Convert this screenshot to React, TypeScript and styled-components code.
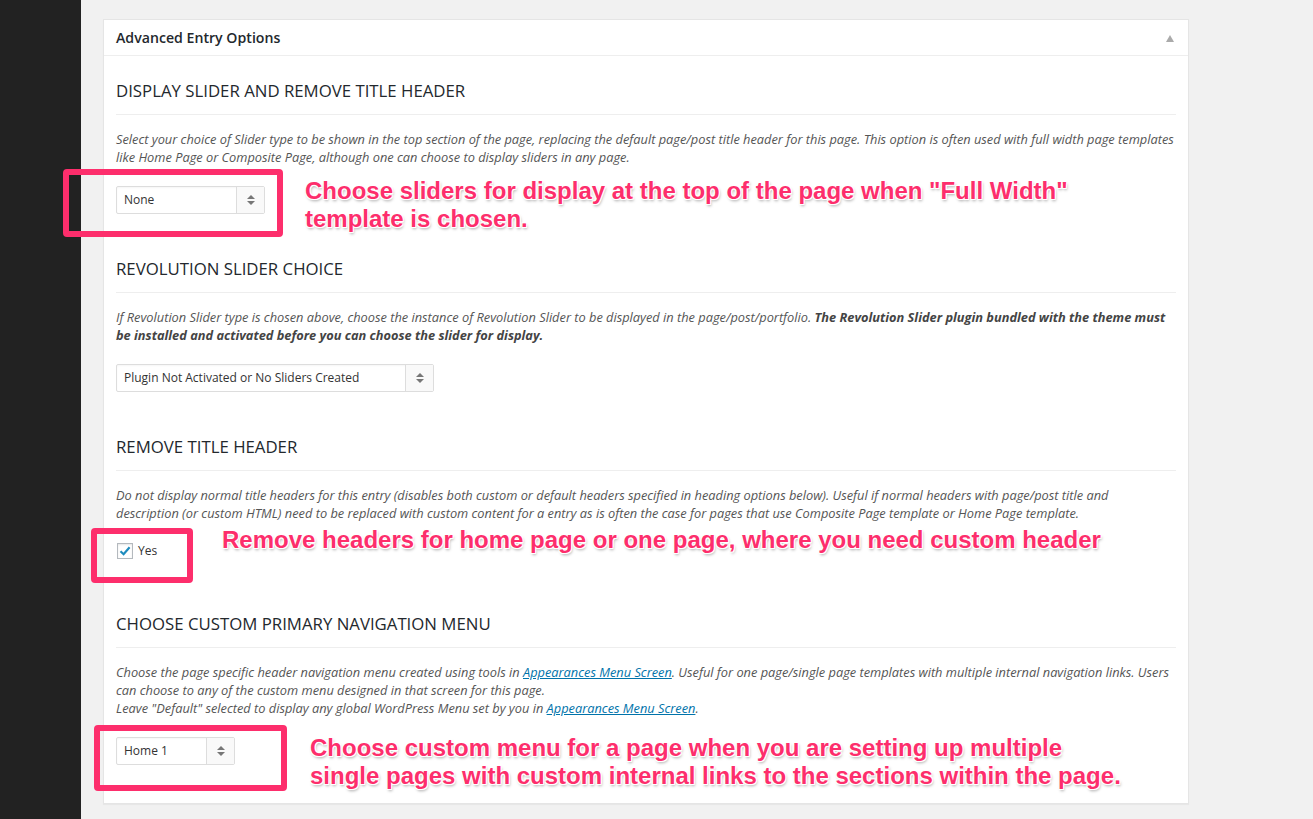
import React from "react";
import styled, { createGlobalStyle } from "styled-components";

const Global = createGlobalStyle`
  html, body { margin: 0; padding: 0; background: #f1f1f1; }
  body { font-family: "Open Sans", "Noto Sans", sans-serif; color: #444; }
  * { box-sizing: border-box; }
`;

const Page = styled.div`
  position: relative;
  display: flex;
  width: 1313px;
  height: 819px;
  overflow: hidden;
  background: #f1f1f1;
`;

const Sidebar = styled.div`
  flex: 0 0 81px;
  background: #222;
`;

const Main = styled.div`
  flex: 1;
  padding: 19px 0 0 22px;
`;

const Panel = styled.div`
  width: 1086px;
  background: #fff;
  border: 1px solid #e5e5e5;
  box-shadow: 0 1px 1px rgba(0, 0, 0, 0.04);
`;

const PanelHeader = styled.div`
  height: 36px;
  display: flex;
  align-items: center;
  justify-content: space-between;
  padding: 2px 12px 0;
  border-bottom: 1px solid #eee;
`;

const PanelTitle = styled.h2`
  margin: 0;
  font-size: 14.15px;
  font-weight: 600;
  color: #23282d;
  line-height: 1;
`;

const Toggle = styled.span`
  width: 0;
  height: 0;
  border-left: 4px solid transparent;
  border-right: 4px solid transparent;
  border-bottom: 7px solid #aaa;
  margin-right: 2px;
`;

const PanelBody = styled.div`
  padding: 23px 12px 38px 12px;
  display: flex;
  flex-direction: column;
  gap: 43px;
`;

const Section = styled.section`
  display: flex;
  flex-direction: column;
`;

const Heading = styled.h3`
  margin: 0;
  font-size: 16.8px;
  font-weight: 400;
  line-height: 24px;
  color: #23282d;
  padding-bottom: 11px;
  border-bottom: 1px solid #eee;
`;

const Desc = styled.p`
  margin: 15px 0 0;
  font-size: 12.8px;
  line-height: 18px;
  font-style: italic;
  color: #555;
  white-space: nowrap;
  & b { font-weight: 700; color: #444; }
  & a { color: #0073aa; text-decoration: underline; }
`;

const Field = styled.div<{ $h?: number }>`
  margin-top: 20px;
  height: ${(p) => p.$h ?? 28}px;
  display: flex;
  align-items: flex-start;
`;

const SelectBox = styled.div<{ $w: number }>`
  width: ${(p) => p.$w}px;
  height: 28px;
  display: flex;
  border: 1px solid #ddd;
  border-radius: 2px;
  background: #fff;
  box-shadow: inset 0 1px 2px rgba(0, 0, 0, 0.04);
`;

const SelectValue = styled.span`
  flex: 1;
  padding-left: 7px;
  font-size: 12px;
  line-height: 26px;
  color: #333;
`;

const SelectArrow = styled.span`
  flex: 0 0 28px;
  border-left: 1px solid #ddd;
  background: #f9f9f9;
  display: flex;
  flex-direction: column;
  align-items: center;
  justify-content: center;
  gap: 2px;
`;

const Tri = styled.span<{ $up?: boolean }>`
  width: 0;
  height: 0;
  border-left: 4px solid transparent;
  border-right: 4px solid transparent;
  ${(p) => (p.$up ? "border-bottom: 4px solid #777;" : "border-top: 4px solid #777;")}
`;

const CheckRow = styled.label`
  display: flex;
  align-items: center;
  gap: 5px;
  padding-left: 1px;
  font-size: 12px;
  color: #333;
`;

const CheckBox = styled.span`
  width: 16px;
  height: 16px;
  border: 1px solid #b4b9be;
  background: #fff;
  display: flex;
  align-items: center;
  justify-content: center;
  box-shadow: inset 0 1px 2px rgba(0, 0, 0, 0.1);
`;

const Mark = styled.div<{ $x: number; $y: number; $w: number; $h: number }>`
  position: absolute;
  left: ${(p) => p.$x}px;
  top: ${(p) => p.$y}px;
  width: ${(p) => p.$w}px;
  height: ${(p) => p.$h}px;
  border: 6px solid #fd2e6c;
  border-radius: 4px;
  pointer-events: none;
`;

const Note = styled.div<{ $x: number; $y: number }>`
  position: absolute;
  left: ${(p) => p.$x}px;
  top: ${(p) => p.$y}px;
  font-family: "Liberation Sans", Arial, sans-serif;
  font-weight: 700;
  font-size: 24px;
  line-height: 28px;
  color: #fd2e6c;
  white-space: nowrap;
  text-shadow: 0 0 1px #fff, 0 0 2px #fff, 1px 1px 0 #fff, -1px -1px 0 #fff,
    1px -1px 0 #fff, -1px 1px 0 #fff, 1px 2px 3px rgba(0, 0, 0, 0.35);
`;

const Select = ({ w, value }: { w: number; value: string }) => (
  <SelectBox $w={w}>
    <SelectValue>{value}</SelectValue>
    <SelectArrow>
      <Tri $up />
      <Tri />
    </SelectArrow>
  </SelectBox>
);

export default function App() {
  return (
    <Page>
      <Global />
      <Sidebar />
      <Main>
        <Panel>
          <PanelHeader>
            <PanelTitle>Advanced Entry Options</PanelTitle>
            <Toggle />
          </PanelHeader>
          <PanelBody>
            <Section>
              <Heading>DISPLAY SLIDER AND REMOVE TITLE HEADER</Heading>
              <Desc>
                Select your choice of Slider type to be shown in the top section of the page, replacing the default page/post title header for this page. This option is often used with full width page templates
                <br />
                like Home Page or Composite Page, although one can choose to display sliders in any page.
              </Desc>
              <Field>
                <Select w={149} value="None" />
              </Field>
            </Section>
            <Section>
              <Heading>REVOLUTION SLIDER CHOICE</Heading>
              <Desc>
                If Revolution Slider type is chosen above, choose the instance of Revolution Slider to be displayed in the page/post/portfolio.{" "}
                <b>The Revolution Slider plugin bundled with the theme must</b>
                <br />
                <b>be installed and activated before you can choose the slider for display.</b>
              </Desc>
              <Field>
                <Select w={318} value="Plugin Not Activated or No Sliders Created" />
              </Field>
            </Section>
            <Section>
              <Heading>REMOVE TITLE HEADER</Heading>
              <Desc>
                Do not display normal title headers for this entry (disables both custom or default headers specified in heading options below). Useful if normal headers with page/post title and
                <br />
                description (or custom HTML) need to be replaced with custom content for a entry as is often the case for pages that use Composite Page template or Home Page template.
              </Desc>
              <Field $h={27}>
                <CheckRow>
                  <CheckBox>
                    <svg width="12" height="12" viewBox="0 0 12 12">
                      <path d="M1.5 6.2 L4.6 9.2 L10.6 2.2" fill="none" stroke="#1e8cbe" strokeWidth="2.2" />
                    </svg>
                  </CheckBox>
                  Yes
                </CheckRow>
              </Field>
            </Section>
            <Section>
              <Heading>CHOOSE CUSTOM PRIMARY NAVIGATION MENU</Heading>
              <Desc>
                Choose the page specific header navigation menu created using tools in <a href="#">Appearances Menu Screen</a>. Useful for one page/single page templates with multiple internal navigation links. Users
                <br />
                can choose to any of the custom menu designed in that screen for this page.
                <br />
                Leave "Default" selected to display any global WordPress Menu set by you in <a href="#">Appearances Menu Screen</a>.
              </Desc>
              <Field>
                <Select w={119} value="Home 1" />
              </Field>
            </Section>
          </PanelBody>
        </Panel>
      </Main>

      <Mark $x={63} $y={169} $w={220} $h={68} />
      <Note $x={305} $y={177}>
        Choose sliders for display at the top of the page when "Full Width"
        <br />
        template is chosen.
      </Note>
      <Mark $x={91} $y={528} $w={102} $h={55} />
      <Note $x={222} $y={526}>
        Remove headers for home page or one page, where you need custom header
      </Note>
      <Mark $x={94} $y={725} $w={193} $h={66} />
      <Note $x={310} $y={734}>
        Choose custom menu for a page when you are setting up multiple
        <br />
        single pages with custom internal links to the sections within the page.
      </Note>
    </Page>
  );
}
